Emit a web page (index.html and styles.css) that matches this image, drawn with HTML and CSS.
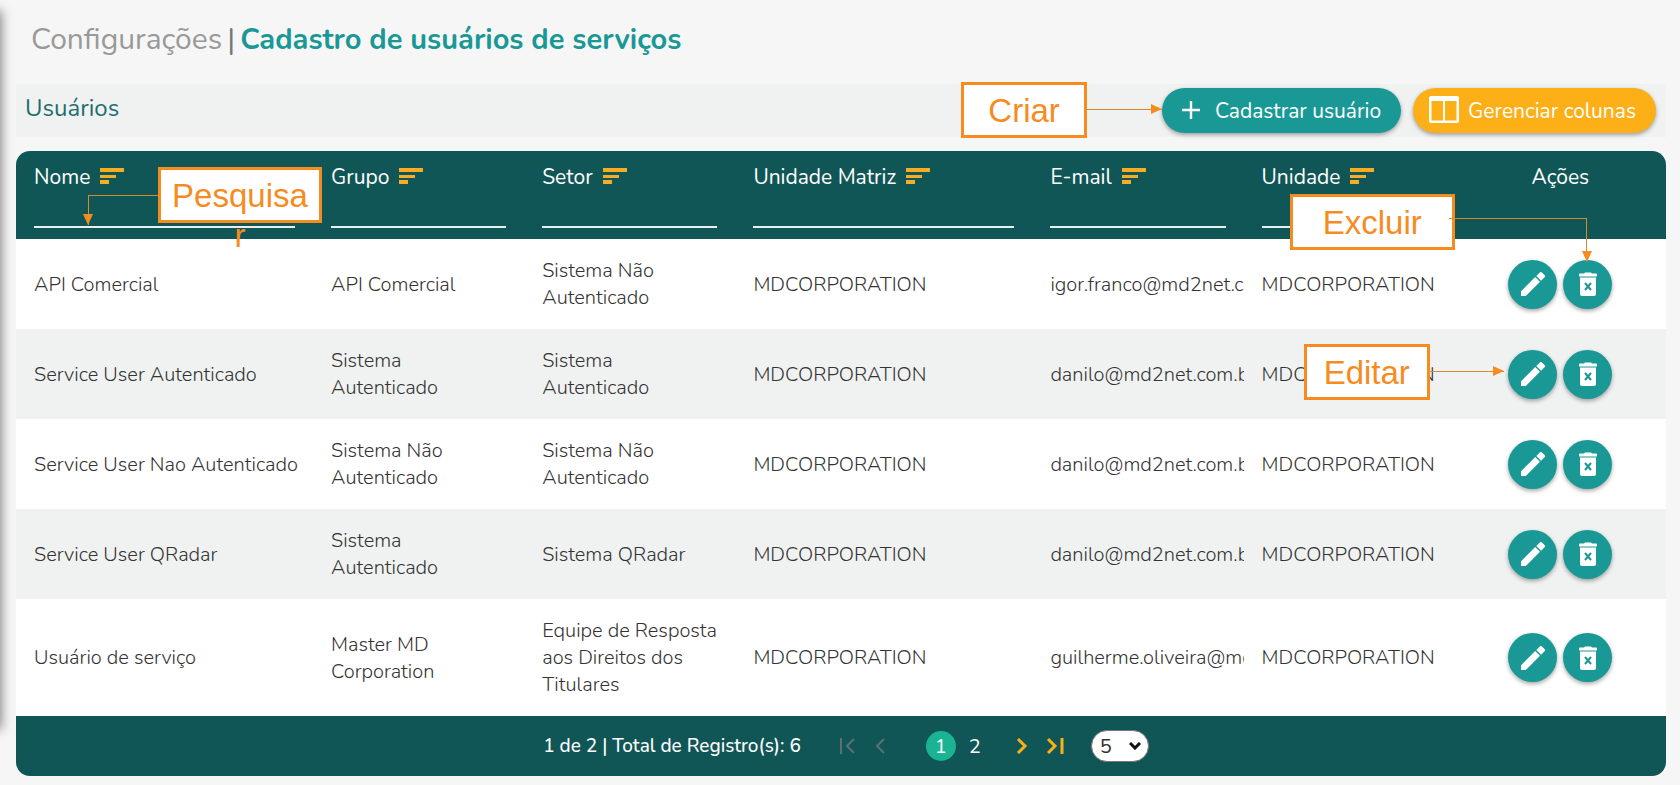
FILE: index.html
```html
<!DOCTYPE html>
<html lang="pt-BR">
<head>
<meta charset="utf-8">
<meta name="viewport" content="width=device-width, initial-scale=1">
<title>Cadastro de usuários de serviços</title>
<link rel="stylesheet" href="styles.css">
</head>
<body>
<svg class="sprite" aria-hidden="true">
  <symbol id="sort" viewBox="0 0 24 16"><path d="M0 0h24v4H0zM0 7h16v3H0zM0 12h9v4H0z"/></symbol>
  <symbol id="pencil" viewBox="0 0 24 24"><path d="M0 19.200V24h4.800L19 9.800 14.200 5zM23.500 5.300a1.600 1.600 0 0 0 0-2.200L20.900.5a1.600 1.600 0 0 0-2.200 0L15.300 3.900 20.100 8.700z"/></symbol>
  <symbol id="trash" viewBox="0 0 18 24"><path d="M0 2.500Q0 1.500 1 1.500h4L6 .5h6l1 1h4q1 0 1 1V4.500H0zM1 5.500h16V22a2 2 0 0 1-2 2H3a2 2 0 0 1-2-2z"/><path d="M6 11l6 7M12 11l-6 7" fill="none" stroke="#1a9896" stroke-width="2"/></symbol>
</svg>
<aside class="sidebar-edge"></aside>
<main class="page">
  <h1 class="title"><span class="title-section">Configurações</span><span class="title-bar">|</span><span class="title-page">Cadastro de usuários de serviços</span></h1>

  <section class="toolbar">
    <h2 class="toolbar-title">Usuários</h2>
    <div class="toolbar-actions">
      <div class="anchor">
        <div class="callout callout-create">Criar</div>
        <div class="arrow arrow-create"></div>
        <button class="btn btn-create" type="button"><svg class="icon-plus" viewBox="0 0 18 18"><path d="M9 0v18M0 9h18"/></svg>Cadastrar usuário</button>
      </div>
      <button class="btn btn-columns" type="button"><svg class="icon-columns" viewBox="0 0 30 27"><path fill-rule="evenodd" d="M2 0h26a2 2 0 0 1 2 2v23a2 2 0 0 1-2 2H2a2 2 0 0 1-2-2V2a2 2 0 0 1 2-2zM2.500 5v19.500h11.500V5zM16 5v19.500H27.500V5z"/></svg>Gerenciar colunas</button>
    </div>
  </section>

  <section class="card">
    <table class="users">
      <colgroup><col class="wide"><col><col><col class="wide"><col><col><col></colgroup>
      <thead>
        <tr>
          <th><label class="head" for="f-nome">Nome <svg class="icon-sort"><use href="#sort"/></svg></label><input class="filter" id="f-nome" type="text">
            <div class="callout callout-search">Pesquisar</div><div class="arrow arrow-search"></div></th>
          <th><label class="head" for="f-grupo">Grupo <svg class="icon-sort"><use href="#sort"/></svg></label><input class="filter" id="f-grupo" type="text"></th>
          <th><label class="head" for="f-setor">Setor <svg class="icon-sort"><use href="#sort"/></svg></label><input class="filter" id="f-setor" type="text"></th>
          <th><label class="head" for="f-matriz">Unidade Matriz <svg class="icon-sort"><use href="#sort"/></svg></label><input class="filter" id="f-matriz" type="text"></th>
          <th><label class="head" for="f-email">E-mail <svg class="icon-sort"><use href="#sort"/></svg></label><input class="filter" id="f-email" type="text"></th>
          <th><label class="head" for="f-unidade">Unidade <svg class="icon-sort"><use href="#sort"/></svg></label><input class="filter" id="f-unidade" type="text"></th>
          <th class="actions-head"><span class="head">Ações</span>
            <div class="callout callout-delete">Excluir</div><div class="arrow arrow-delete"></div></th>
        </tr>
      </thead>
      <tbody>
        <tr>
          <td>API Comercial</td><td>API Comercial</td><td>Sistema Não Autenticado</td><td>MDCORPORATION</td><td class="email">igor.franco@md2net.com.br</td><td>MDCORPORATION</td>
          <td class="actions"><button class="round" type="button" aria-label="Editar"><svg class="icon-pencil"><use href="#pencil"/></svg></button><button class="round" type="button" aria-label="Excluir"><svg class="icon-trash"><use href="#trash"/></svg></button></td>
        </tr>
        <tr>
          <td>Service User Autenticado</td><td>Sistema Autenticado</td><td>Sistema Autenticado</td><td>MDCORPORATION</td><td class="email">danilo@md2net.com.br</td><td>MDCORPORATION</td>
          <td class="actions"><div class="callout callout-edit">Editar</div><div class="arrow arrow-edit"></div><button class="round" type="button" aria-label="Editar"><svg class="icon-pencil"><use href="#pencil"/></svg></button><button class="round" type="button" aria-label="Excluir"><svg class="icon-trash"><use href="#trash"/></svg></button></td>
        </tr>
        <tr>
          <td>Service User Nao Autenticado</td><td>Sistema Não Autenticado</td><td>Sistema Não Autenticado</td><td>MDCORPORATION</td><td class="email">danilo@md2net.com.br</td><td>MDCORPORATION</td>
          <td class="actions"><button class="round" type="button" aria-label="Editar"><svg class="icon-pencil"><use href="#pencil"/></svg></button><button class="round" type="button" aria-label="Excluir"><svg class="icon-trash"><use href="#trash"/></svg></button></td>
        </tr>
        <tr>
          <td>Service User QRadar</td><td>Sistema Autenticado</td><td>Sistema QRadar</td><td>MDCORPORATION</td><td class="email">danilo@md2net.com.br</td><td>MDCORPORATION</td>
          <td class="actions"><button class="round" type="button" aria-label="Editar"><svg class="icon-pencil"><use href="#pencil"/></svg></button><button class="round" type="button" aria-label="Excluir"><svg class="icon-trash"><use href="#trash"/></svg></button></td>
        </tr>
        <tr>
          <td>Usuário de serviço</td><td>Master MD Corporation</td><td>Equipe de Resposta aos Direitos dos Titulares</td><td>MDCORPORATION</td><td class="email">guilherme.oliveira@md2net.com.br</td><td>MDCORPORATION</td>
          <td class="actions"><button class="round" type="button" aria-label="Editar"><svg class="icon-pencil"><use href="#pencil"/></svg></button><button class="round" type="button" aria-label="Excluir"><svg class="icon-trash"><use href="#trash"/></svg></button></td>
        </tr>
      </tbody>
    </table>
    <footer class="pager">
      <span class="pager-text">1 de 2 | Total de Registro(s): 6</span>
      <nav class="pager-nav" aria-label="Paginação">
        <button class="step" type="button" disabled aria-label="Primeira"><svg class="icon-step" viewBox="0 0 18 16"><path d="M2 0v16M15 1 8 8l7 7"/></svg></button>
        <button class="step" type="button" disabled aria-label="Anterior"><svg class="icon-step" viewBox="0 0 18 16"><path d="M12 1 5 8l7 7"/></svg></button>
        <div class="pages"><button class="page-no current" type="button">1</button><button class="page-no" type="button">2</button></div>
        <button class="step" type="button" aria-label="Próxima"><svg class="icon-step" viewBox="0 0 18 16"><path d="M5 1l7 7-7 7"/></svg></button>
        <button class="step" type="button" aria-label="Última"><svg class="icon-step" viewBox="0 0 18 16"><path d="M2 1l7 7-7 7M16 0v16"/></svg></button>
      </nav>
      <div class="size"><select class="size-select" aria-label="Registros por página"><option>5</option><option>10</option></select><svg class="icon-caret" viewBox="0 0 12 8"><path d="M1 1l5 5 5-5"/></svg></div>
    </footer>
  </section>
</main>
</body>
</html>
```
FILE: styles.css
```css
* { box-sizing: border-box; }
body {
  margin: 0;
  background: #f6f6f6;
  color: #333;
  font-family: Nunito, "Open Sans", sans-serif;
  font-size: 20px;
  line-height: 27px;
}
button, input, select { font: inherit; }
button { cursor: pointer; }
.sprite { display: none; }
.sidebar-edge {
  position: absolute;
  left: -20px;
  top: 12px;
  width: 20px;
  height: 716px;
  box-shadow: 0 0 12px 1px rgba(0, 0, 0, 0.5);
}
.page { padding: 20px 14px 10px 16px; }

.title {
  display: flex;
  gap: 5px;
  margin: 0 0 24px;
  padding: 0 15px;
  font-size: 30px;
  line-height: 40px;
  font-weight: 400;
  color: #999;
}
.title-bar { color: #777; }
.title-page { color: #1a9896; font-size: 29px; font-weight: 700; }

.toolbar {
  display: flex;
  justify-content: space-between;
  height: 53px;
  padding: 4px 10px 4px 9px;
  background: #f0f2f2;
}
.toolbar-title {
  margin: 4px 0 0;
  font-size: 24px;
  line-height: 32px;
  font-weight: 400;
  color: #1f6e6d;
}
.toolbar-actions { display: flex; gap: 12px; align-items: flex-start; }
.anchor { position: relative; }
.btn {
  display: flex;
  align-items: center;
  justify-content: center;
  height: 45px;
  padding: 2px 20px 0 16px;
  border: 0;
  border-radius: 23px;
  color: #fff;
  font-size: 21px;
  white-space: nowrap;
  box-shadow: 0 2px 4px rgba(0, 0, 0, 0.35);
}
.btn-create { gap: 15px; min-width: 239px; padding-left: 20px; background: #1a9896; }
.btn-columns { gap: 9px; min-width: 242px; background: #fcaf17; }
.icon-plus { width: 18px; height: 18px; margin-bottom: 4px; stroke: #fff; stroke-width: 2.400; }
.icon-columns { width: 30px; height: 27px; margin-bottom: 4px; fill: #fff; }

.card { margin-top: 14px; border-radius: 14px; background: #105656; }
.users {
  width: 100%;
  table-layout: fixed;
  border-collapse: separate;
  border-spacing: 0;
}
.users col { width: 12.800%; }
.users .wide { width: 18%; }
.users th {
  position: relative;
  height: 88px;
  padding: 12px 18px 0;
  color: #fff;
  font-size: 21px;
  font-weight: 400;
  text-align: left;
  vertical-align: top;
}
.users .actions-head { text-align: center; }
.head { display: flex; align-items: center; gap: 10px; height: 28px; white-space: nowrap; }
.actions-head .head { justify-content: center; }
.icon-sort { width: 24px; height: 16px; margin-bottom: 2px; fill: #f8ab24; }
.filter {
  display: block;
  width: 100%;
  height: 37px;
  padding: 0;
  border: 0;
  border-bottom: 2px solid #e8efef;
  background: transparent;
  color: #fff;
  outline: 0;
}
.users td { padding: 18px 12px 18px 18px; background: #fff; font-weight: 300; }
.users tr:nth-child(even) td { background: #f0f2f2; }
.users .email { padding-right: 0; overflow: hidden; white-space: nowrap; }
.users .actions { position: relative; padding: 0; text-align: center; white-space: nowrap; }
.round {
  display: inline-flex;
  align-items: center;
  justify-content: center;
  width: 49px;
  height: 49px;
  margin: 0 3px;
  padding: 0;
  border: 0;
  border-radius: 50%;
  background: #1a9896;
  vertical-align: middle;
  box-shadow: 0 2px 4px rgba(0, 0, 0, 0.35);
}
.icon-pencil { width: 24px; height: 24px; fill: #fff; }
.icon-trash { width: 18px; height: 24px; fill: #fff; }

.pager {
  display: flex;
  align-items: center;
  justify-content: center;
  height: 60px;
  padding-left: 10px;
  color: #fff;
}
.pager-text { margin-right: 38px; font-size: 19px; font-weight: 500; }
.pager-nav { display: flex; align-items: center; gap: 15px; }
.step { display: flex; padding: 0; border: 0; background: transparent; color: #fcaf17; }
.step:disabled { color: #5d7078; }
.icon-step { width: 18px; height: 16px; fill: none; stroke: currentColor; stroke-width: 3; }
.step:disabled .icon-step { stroke-width: 2; }
.pages { display: flex; gap: 4px; margin: 0 8px 0 21px; }
.page-no {
  width: 30px;
  height: 30px;
  padding: 0;
  border: 0;
  border-radius: 50%;
  background: transparent;
  color: #fff;
}
.page-no.current { background: #1ab394; }
.size { position: relative; margin-left: 27px; }
.size-select {
  display: block;
  width: 58px;
  height: 32px;
  padding: 0 8px;
  border: 1px solid #777;
  border-radius: 16px;
  background: #fff;
  color: #333;
  appearance: none;
}
.icon-caret {
  position: absolute;
  right: 8px;
  top: 12px;
  width: 12px;
  height: 8px;
  fill: none;
  stroke: #111;
  stroke-width: 3;
  pointer-events: none;
}

.callout {
  position: absolute;
  z-index: 2;
  height: 56px;
  padding: 6px 10px;
  border: 3px solid #f68b1f;
  background: #fff;
  color: #f68b1f;
  font-family: "Liberation Sans", Arial, sans-serif;
  font-size: 33px;
  font-weight: 400;
  line-height: 40px;
  text-align: center;
}
.arrow { position: absolute; z-index: 3; border: 0 solid #d98a2b; }
.arrow::after { content: ""; position: absolute; border: 5px solid transparent; }

.callout-create { right: calc(100% + 75px); top: -6px; width: 126px; }
.arrow-create { right: 100%; top: 21px; width: 75px; border-top-width: 1px; }
.callout-search { left: 142px; top: 16px; width: 164px; word-break: break-all; }
.arrow-search { left: 72px; top: 44px; width: 70px; height: 30px; border-width: 1px 0 0 1px; }
.callout-delete { right: 100%; top: 43px; width: 165px; }
.arrow-delete { left: -6px; right: calc(50% - 27px); top: 67px; height: 44px; border-width: 1px 1px 0 0; }
.callout-edit { right: calc(100% + 25px); top: 15px; width: 126px; }
.arrow-edit { left: -25px; right: calc(50% + 56px); top: 42px; border-top-width: 1px; }

.arrow-create::after, .arrow-edit::after {
  right: 0;
  top: -6px;
  border-left: 11px solid #f68b1f;
  border-right: 0;
}
.arrow-search::after, .arrow-delete::after {
  bottom: 0;
  border-top: 11px solid #f68b1f;
  border-bottom: 0;
}
.arrow-search::after { left: -6px; }
.arrow-delete::after { right: -6px; }
```
